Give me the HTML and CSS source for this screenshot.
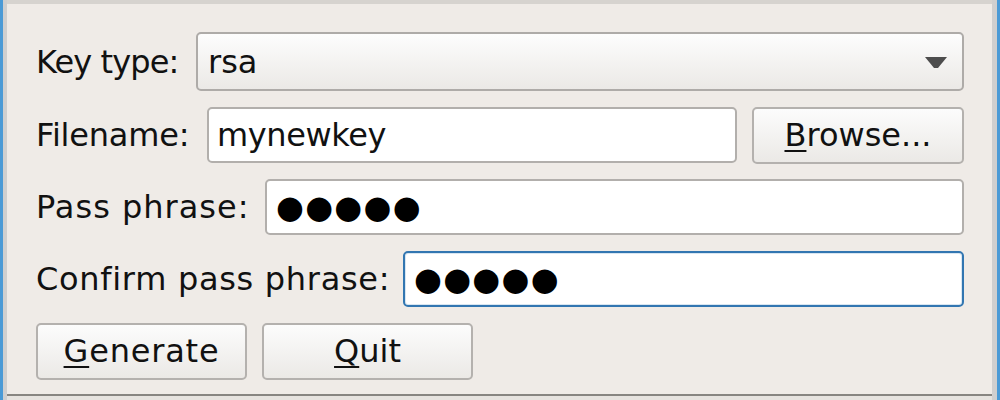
FILE: index.html
```html
<!DOCTYPE html>
<html>
<head>
<meta charset="utf-8">
<link rel="stylesheet" href="styles.css">
</head>
<body>
<div class="frame-l"></div>
<div class="win">
  <div class="win-top"></div>
  <div class="content">
    <div class="row">
      <div class="label lbl-key">Key type:</div>
      <div class="combo">
        <span class="combo-text">rsa</span>
        <svg class="arrow" width="22" height="11" viewBox="0 0 22 11"><polygon points="0,0 22,0 13,11 9,11" fill="#4d4d4d"/></svg>
      </div>
    </div>
    <div class="row">
      <div class="label lbl-file">Filename:</div>
      <div class="field grow">mynewkey</div>
      <div class="button browse"><u>B</u>rowse...</div>
    </div>
    <div class="row">
      <div class="label lbl-pass">Pass phrase:</div>
      <div class="field grow dots">●●●●●</div>
    </div>
    <div class="row">
      <div class="label lbl-confirm">Confirm pass phrase:</div>
      <div class="field grow dots focus">●●●●●</div>
    </div>
    <div class="row">
      <div class="button action gen"><u>G</u>enerate</div>
      <div class="button action"><u>Q</u>uit</div>
    </div>
  </div>
  <div class="win-bottom"></div>
</div>
<div class="frame-r"></div>
</body>
</html>
```
FILE: styles.css
```css
html, body {
  margin: 0;
  padding: 0;
}
body {
  width: 1000px;
  height: 400px;
  overflow: hidden;
  display: flex;
  background: #efebe7;
  font-family: "DejaVu Sans", sans-serif;
  font-size: 32px;
  color: #111;
}
.frame-l {
  width: 3px;
  border-right: 4px solid #cfcfcf;
  background: #4a9ad6;
}
.frame-r {
  width: 3px;
  border-left: 5px solid #cfcfcf;
  background: #4a9ad6;
}
.win {
  flex: 1;
  display: flex;
  flex-direction: column;
}
.win-top {
  height: 4px;
  background: #d6d3cf;
}
.content {
  flex: 1;
  display: flex;
  flex-direction: column;
  gap: 16px;
  padding: 28px 28px 0 29px;
}
.win-bottom {
  height: 4px;
  border-top: 2px solid #878581;
  background: #e6e3df;
}
.row {
  display: flex;
  align-items: center;
  height: 56px;
  gap: 15px;
}
.row:first-child {
  height: 59px;
}
.label {
  flex: none;
  white-space: nowrap;
}
.lbl-key { width: 160px; margin-right: -15px; letter-spacing: -0.9px; }
.lbl-file { width: 171px; margin-right: -15px; letter-spacing: -0.2px; }
.lbl-pass { width: 229px; margin-right: -15px; letter-spacing: 1px; }
.lbl-confirm { width: 367px; margin-right: -15px; letter-spacing: 0.7px; }
.combo {
  flex: 1;
  height: 59px;
  box-sizing: border-box;
  border: 2px solid #aeaba8;
  border-radius: 5px;
  background: linear-gradient(#fdfdfd, #ebe9e6);
  display: flex;
  align-items: center;
  justify-content: space-between;
  padding: 0 15px 0 10px;
}
.arrow {
  display: block;
  margin-top: 2px;
}
.field {
  height: 56px;
  box-sizing: border-box;
  border: 2px solid #b2afac;
  border-radius: 5px;
  background: #fff;
  display: flex;
  align-items: center;
  padding: 0 8px;
  white-space: nowrap;
  letter-spacing: -0.4px;
}
.grow {
  flex: 1;
}
.dots {
  color: #000;
  padding-left: 9px;
  letter-spacing: 1.25px;
}
.focus {
  border-color: #3276b1;
  box-shadow: inset 0 0 0 1px #d8e6f2;
}
.button {
  height: 57px;
  box-sizing: border-box;
  border: 2px solid #b4b1ae;
  border-radius: 5px;
  background: linear-gradient(#fcfcfc, #ebe9e6);
  display: flex;
  align-items: center;
  justify-content: center;
  white-space: nowrap;
}
.button u {
  text-decoration-thickness: 2px;
  text-underline-offset: 4px;
}
.browse {
  width: 212px;
  flex: none;
}
.action {
  width: 211px;
  flex: none;
}
.gen {
  letter-spacing: 0.8px;
}
```
